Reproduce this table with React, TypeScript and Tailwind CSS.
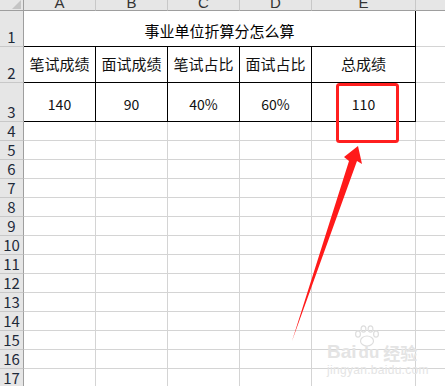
import React from 'react';

const cols = ['A', 'B', 'C', 'D', 'E'];
const headers = ['笔试成绩', '面试成绩', '笔试占比', '面试占比', '总成绩'];
const values = ['140', '90', '40%', '60%', '110'];
const emptyRows = Array.from({ length: 14 }, (_, i) => i + 4);

const font = { fontFamily: '"Noto Sans CJK SC", "Liberation Sans", sans-serif' };

function RowHead({ n }: { n: number }) {
  return (
    <div className="flex items-end justify-center overflow-hidden bg-[#e6e6e6] border-r border-b border-r-[#9e9e9e] border-b-[#c8c8c8] text-[15px] leading-[18px] text-[#1f2a3a]">
      {n}
    </div>
  );
}

export default function App() {
  return (
    <div className="relative w-[445px] h-[386px] overflow-hidden bg-white" style={font}>
      <div className="grid grid-cols-[24px_72px_72px_72px_72px_104px_1fr] grid-rows-[11px_36px_36px_39px_repeat(14,19px)]">
        {/* column headers */}
        <div className="relative bg-[#e6e6e6] border-r border-b border-[#9e9e9e] overflow-hidden">
          <div className="absolute right-[2px] bottom-[1px] w-0 h-0 border-l-[9px] border-l-transparent border-b-[9px] border-b-[#c4c4c4]" />
        </div>
        {cols.map((c) => (
          <div
            key={c}
            className="flex items-end justify-center overflow-hidden bg-[#e6e6e6] border-r border-b border-r-[#c8c8c8] border-b-[#9e9e9e] text-[15px] leading-[15px] text-[#333]"
            style={{ fontFamily: '"Liberation Sans", sans-serif' }}
          >
            {c}
          </div>
        ))}
        <div className="bg-[#e6e6e6] border-b border-[#9e9e9e]" />

        {/* row 1 */}
        <RowHead n={1} />
        <div className="col-span-5 flex items-center justify-center pt-[6px] border-r border-b border-black text-[15px] text-black">
          事业单位折算分怎么算
        </div>
        <div className="border-b border-[#d4d4d4]" />

        {/* row 2 */}
        <RowHead n={2} />
        {headers.map((h) => (
          <div key={h} className="flex items-center justify-center border-r border-b border-black text-[15px] text-[#111]">
            {h}
          </div>
        ))}
        <div className="border-b border-[#d4d4d4]" />

        {/* row 3 */}
        <RowHead n={3} />
        {values.map((v) => (
          <div key={v} className="flex items-center justify-center pt-[5px] border-r border-b border-black text-[14px] text-[#111]">
            {v}
          </div>
        ))}
        <div className="border-b border-[#d4d4d4]" />

        {/* empty rows */}
        {emptyRows.map((n) => (
          <React.Fragment key={n}>
            <RowHead n={n} />
            {cols.map((c) => (
              <div key={c} className="border-r border-b border-[#d4d4d4]" />
            ))}
            <div className="border-b border-[#d4d4d4]" />
          </React.Fragment>
        ))}
      </div>

      {/* annotation */}
      <svg className="absolute inset-0 pointer-events-none" width="445" height="386">
        <rect x="337.5" y="84.5" width="60" height="57" rx="2" fill="none" stroke="#ff1f1f" strokeWidth="3" />
        <polygon points="358,146 362,164 357,161 292,341 349,161 344,157" fill="#ff1a1a" />
        <g fill="none" stroke="#dedede" strokeWidth="1.2">
          <ellipse cx="367" cy="341" rx="6.5" ry="5" />
          <ellipse cx="358" cy="334" rx="2.4" ry="3.2" />
          <ellipse cx="363.5" cy="329" rx="2.4" ry="3.2" />
          <ellipse cx="370.5" cy="329" rx="2.4" ry="3.2" />
          <ellipse cx="376" cy="334" rx="2.4" ry="3.2" />
        </g>
      </svg>

      {/* watermark */}
      <div className="absolute left-[327px] top-[342px] flex flex-col items-start pointer-events-none text-[#e4e4e4]">
        <div className="flex items-end gap-[2px] leading-none">
          <span className="text-[19px] font-bold" style={{ fontFamily: '"Liberation Sans", sans-serif' }}>Bai</span>
          <span className="text-[17px] font-bold" style={{ fontFamily: '"Liberation Sans", sans-serif' }}>du</span>
          <span className="text-[17px] font-bold ml-[2px]">经验</span>
        </div>
        <span className="text-[12px] leading-none mt-[3px] tracking-[0.3px]" style={{ fontFamily: '"Liberation Sans", sans-serif' }}>
          jingyan.baidu.com
        </span>
      </div>
    </div>
  );
}
